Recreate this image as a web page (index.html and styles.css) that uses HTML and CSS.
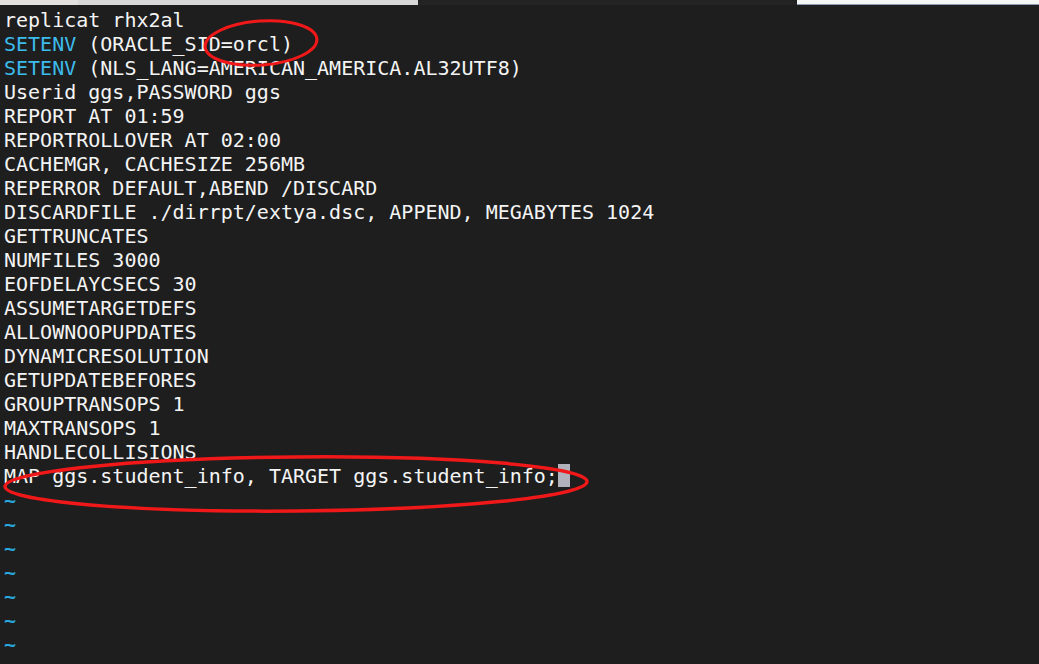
FILE: index.html
```html
<!DOCTYPE html>
<html>
<head>
<meta charset="utf-8">
<link rel="stylesheet" href="styles.css">
</head>
<body>
<div class="tabstrip">
  <div class="seg seg-a"></div>
  <div class="seg seg-b"></div>
  <div class="seg seg-tab"></div>
  <div class="seg seg-c"></div>
</div>
<div class="editor">
  <div class="line">replicat rhx2al</div>
  <div class="line"><span class="kw">SETENV</span> (ORACLE_SID=orcl)</div>
  <div class="line"><span class="kw">SETENV</span> (NLS_LANG=AMERICAN_AMERICA.AL32UTF8)</div>
  <div class="line">Userid ggs,PASSWORD ggs</div>
  <div class="line">REPORT AT 01:59</div>
  <div class="line">REPORTROLLOVER AT 02:00</div>
  <div class="line">CACHEMGR, CACHESIZE 256MB</div>
  <div class="line">REPERROR DEFAULT,ABEND /DISCARD</div>
  <div class="line">DISCARDFILE ./dirrpt/extya.dsc, APPEND, MEGABYTES 1024</div>
  <div class="line">GETTRUNCATES</div>
  <div class="line">NUMFILES 3000</div>
  <div class="line">EOFDELAYCSECS 30</div>
  <div class="line">ASSUMETARGETDEFS</div>
  <div class="line">ALLOWNOOPUPDATES</div>
  <div class="line">DYNAMICRESOLUTION</div>
  <div class="line">GETUPDATEBEFORES</div>
  <div class="line">GROUPTRANSOPS 1</div>
  <div class="line">MAXTRANSOPS 1</div>
  <div class="line">HANDLECOLLISIONS</div>
  <div class="line">MAP ggs.student_info, TARGET ggs.student_info;<span class="cursor"> </span></div>
  <div class="line tilde">~</div>
  <div class="line tilde">~</div>
  <div class="line tilde">~</div>
  <div class="line tilde">~</div>
  <div class="line tilde">~</div>
  <div class="line tilde">~</div>
  <div class="line tilde">~</div>
</div>
<svg class="marks" width="1039" height="664" viewBox="0 0 1039 664">
  <ellipse cx="261" cy="43" rx="56" ry="22" transform="rotate(-4 261 43)" fill="none" stroke="#f01818" stroke-width="3"/>
  <ellipse cx="296" cy="484" rx="291" ry="27" transform="rotate(-0.5 296 484)" fill="none" stroke="#f01818" stroke-width="3.5"/>
</svg>
</body>
</html>
```
FILE: styles.css
```css
html, body {
  margin: 0;
  padding: 0;
  background: #1e1e1e;
  width: 1039px;
  height: 664px;
  overflow: hidden;
}
body {
  position: relative;
}
.tabstrip {
  display: flex;
  height: 5px;
}
.seg { height: 5px; }
.seg-a { width: 78px; background: #e3e1df; }
.seg-b { width: 340px; background: #d8d8d8; }
.seg-tab {
  width: 379px;
  background: #242424;
  border-radius: 5px 5px 0 0;
}
.seg-c {
  flex: 1;
  background: #f6f6f6;
  border-bottom: 1px solid #8d9cb0;
  box-sizing: border-box;
}
.editor {
  padding: 3px 0 0 4px;
  font-family: "DejaVu Sans Mono", monospace;
  font-size: 20px;
  line-height: 24px;
  color: #f4f4f4;
}
.line {
  height: 24px;
  white-space: pre;
}
.kw { color: #3cbcec; }
.tilde {
  color: #2aa6de;
  font-weight: bold;
}
.cursor {
  display: inline-block;
  width: 12px;
  height: 23px;
  vertical-align: top;
  background: #b2b2bc;
}
.marks {
  position: absolute;
  left: 0;
  top: 0;
  pointer-events: none;
}
```
